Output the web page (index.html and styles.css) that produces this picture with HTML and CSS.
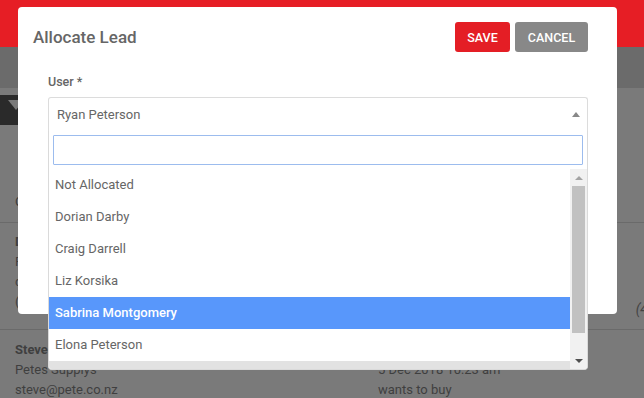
FILE: index.html
```html
<!DOCTYPE html>
<html>
<head>
<meta charset="utf-8">
<link rel="stylesheet" href="styles.css">
</head>
<body>
<div class="page">
  <div class="header"></div>
  <div class="subbar"></div>
  <div class="toolbar"><span class="filter"></span></div>
  <div class="colhead">Company</div>
  <div class="row first">
    <div class="col-left">
      <div class="name">Dorian</div>
      <div>Petes</div>
      <div>dorian</div>
      <div>(09)</div>
    </div>
    <div class="col-end">(4</div>
  </div>
  <div class="row second">
    <div class="col-left">
      <div class="name">Steve Martin</div>
      <div>Petes Supplys</div>
      <div>steve@pete.co.nz</div>
    </div>
    <div class="col-mid">
      <div>&nbsp;</div>
      <div>5 Dec 2018 10:23 am</div>
      <div>wants to buy</div>
    </div>
  </div>
</div>

<div class="modal">
  <div class="modal-head">
    <h1 class="title">Allocate Lead</h1>
    <div class="actions">
      <button class="btn btn-save">SAVE</button>
      <button class="btn btn-cancel">CANCEL</button>
    </div>
  </div>
  <div class="field">
    <div class="label">User *</div>
    <div class="select-wrap">
      <div class="select">
        <span class="value">Ryan Peterson</span>
        <span class="caret-up"></span>
      </div>
      <div class="dropdown">
        <div class="search"><div class="search-input"></div></div>
        <div class="results">
          <ul class="options">
            <li>Not Allocated</li>
            <li>Dorian Darby</li>
            <li>Craig Darrell</li>
            <li>Liz Korsika</li>
            <li class="active">Sabrina Montgomery</li>
            <li>Elona Peterson</li>
            <li class="partial"></li>
          </ul>
          <div class="scrollbar">
            <div class="sb-btn"><span class="sb-up"></span></div>
            <div class="sb-thumb"></div>
            <div class="sb-track"></div>
            <div class="sb-btn"><span class="sb-down"></span></div>
          </div>
        </div>
      </div>
    </div>
  </div>
</div>
</body>
</html>
```

FILE: styles.css
```css
* { box-sizing: border-box; }
html, body {
  margin: 0;
  padding: 0;
}
body {
  width: 644px;
  height: 398px;
  overflow: hidden;
  background: #7a7a7a;
  font-family: Roboto, "Liberation Sans", sans-serif;
  position: relative;
}
.page {
  display: flex;
  flex-direction: column;
}
.header {
  height: 47px;
  background: #e61e25;
}
.subbar {
  height: 41px;
  background: #6b6b6b;
}
.toolbar {
  margin-top: 7px;
  height: 30px;
  width: 200px;
  background: #2a2a2a;
  position: relative;
}
.filter {
  position: absolute;
  left: 8px;
  top: 5px;
  width: 0;
  height: 0;
  border-left: 8px solid transparent;
  border-right: 8px solid transparent;
  border-top: 10px solid #7a7a7a;
}
.colhead {
  height: 98px;
  padding: 69px 0 0 15px;
  font-size: 13px;
  color: #3a3a3a;
  border-bottom: 1px solid #6a6a6a;
}
.row {
  display: flex;
  font-size: 13px;
  color: #3f3f3f;
  line-height: 20px;
}
.row.first {
  height: 107px;
  padding: 9px 0 0 15px;
  border-bottom: 1px solid #6a6a6a;
  justify-content: space-between;
}
.row.first .col-end {
  padding-top: 67px;
  font-style: italic;
  font-size: 14px;
  color: #444;
  margin-right: -4px;
}
.row.second {
  padding: 10px 0 0 15px;
}
.name { font-weight: 700; }
.col-left { width: 363px; }

.modal {
  position: absolute;
  left: 18px;
  top: 7px;
  width: 599px;
  height: 307px;
  background: #fff;
  border-radius: 4px;
  padding: 15px 29px 0 15px;
}
.modal-head {
  display: flex;
  justify-content: space-between;
  align-items: center;
  height: 30px;
}
.title {
  margin: 0;
  font-size: 17px;
  font-weight: 500;
  color: #666;
}
.actions {
  display: flex;
  gap: 5px;
}
.btn {
  border: 0;
  height: 30px;
  border-radius: 3px;
  color: #fff;
  font-family: Roboto, "Liberation Sans", sans-serif;
  font-weight: 500;
  font-size: 12.5px;
  padding: 0;
}
.btn-save { background: #e41e25; width: 55px; }
.btn-cancel { background: #888; width: 73px; }

.field {
  padding: 21px 0 0 15px;
}
.label {
  font-size: 12.5px;
  font-weight: 500;
  color: #666;
  height: 24px;
  padding-top: 1px;
}
.select-wrap {
  position: relative;
  width: 540px;
}
.select {
  height: 34px;
  border: 1px solid #dcdcdc;
  border-bottom: 0;
  border-radius: 3px 3px 0 0;
  display: flex;
  align-items: center;
  justify-content: space-between;
  padding: 0 7px 0 8px;
}
.value {
  font-size: 13px;
  color: #666;
}
.caret-up {
  width: 0;
  height: 0;
  border-left: 4px solid transparent;
  border-right: 4px solid transparent;
  border-bottom: 5px solid #888;
}
.dropdown {
  position: absolute;
  left: 0;
  top: 34px;
  width: 540px;
  background: #fff;
  border: 1px solid #dadada;
  border-top: 0;
  border-radius: 0 0 4px 4px;
  overflow: hidden;
}
.search {
  padding: 4px 4px 4px 4px;
}
.search-input {
  height: 30px;
  border: 1px solid #9cbcee;
  border-radius: 1px;
}
.results {
  display: flex;
  height: 200px;
}
.options {
  list-style: none;
  margin: 0;
  padding: 0;
  flex: 1;
  overflow: hidden;
}
.options li {
  height: 32px;
  line-height: 32px;
  padding-left: 6px;
  font-size: 13px;
  color: #666;
}
.options li.active {
  background: #5897fb;
  color: #fff;
  font-weight: 500;
}
.options li.partial {
  background: #e2e2e2;
}
.scrollbar {
  width: 17px;
  background: #f1f1f1;
  display: flex;
  flex-direction: column;
  align-items: center;
}
.sb-btn {
  height: 17px;
  width: 17px;
  display: flex;
  align-items: center;
  justify-content: center;
}
.sb-up {
  width: 0; height: 0;
  border-left: 4px solid transparent;
  border-right: 4px solid transparent;
  border-bottom: 4px solid #a3a3a3;
}
.sb-down {
  width: 0; height: 0;
  border-left: 4px solid transparent;
  border-right: 4px solid transparent;
  border-top: 4px solid #505050;
}
.sb-thumb {
  width: 13px;
  height: 147px;
  background: #c1c1c1;
}
.sb-track { flex: 1; }
```
